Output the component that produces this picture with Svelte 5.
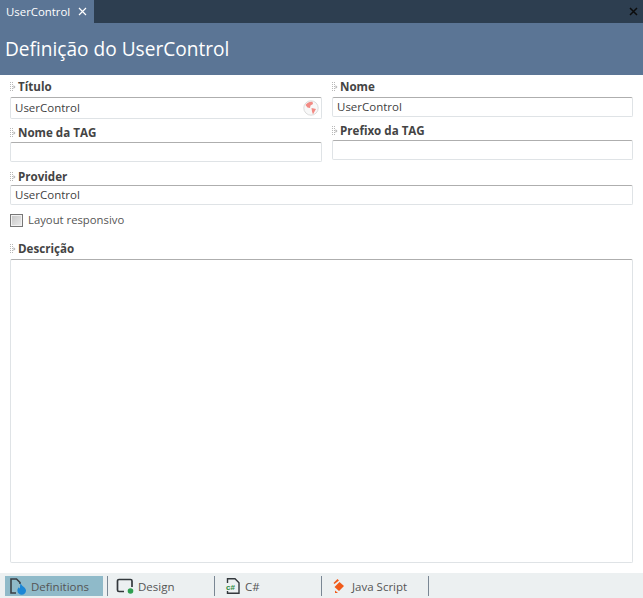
<script lang="ts">
  const tabs = [
    { id: 'definitions', label: 'Definitions', width: 98 },
    { id: 'design', label: 'Design', width: 106 },
    { id: 'csharp', label: 'C#', width: 106 },
    { id: 'js', label: 'Java Script', width: 106 }
  ];
</script>

{#snippet grip()}
  <svg class="grip" width="6" height="10" viewBox="0 0 6 10">
    <path d="M0.5 0v10M2.5 0v10" stroke="#b8b8b8" stroke-width="1" stroke-dasharray="1 1" />
    <path d="M3.500 3l2 2-2 2z" fill="#b4b4b4" />
  </svg>
{/snippet}

<div class="window">
  <div class="tabbar">
    <div class="doc-tab">
      <span>UserControl</span>
      <svg width="9" height="9" viewBox="0 0 9 9"><path d="M1 1l7 7M8 1l-7 7" stroke="#fff" stroke-width="1.2" /></svg>
    </div>
    <svg class="close" width="9" height="9" viewBox="0 0 9 9"><path d="M1 1l7 7M8 1l-7 7" stroke="#0c0c0c" stroke-width="1.5" /></svg>
  </div>

  <header class="title">Definição do UserControl</header>

  <main class="form">
    <div class="columns">
      <div class="col left">
        <div class="field">
          <div class="label">{@render grip()}Título</div>
          <div class="input tall">
            UserControl
            <svg class="globe" width="16" height="16" viewBox="0 0 16 16">
              <circle cx="8" cy="8" r="7.2" fill="#f8f8f8" stroke="#dcdcdc" />
              <path d="M2.500 5C4 2.500 7 1.200 9.500 1.800L10 4 7.500 5.500 7 8 4.500 7.500zM8.500 8l4.500 1-2 3.500-1 2-1-3z" fill="#f28b85" />
            </svg>
          </div>
        </div>
        <div class="field tag-left">
          <div class="label">{@render grip()}Nome da TAG</div>
          <div class="input"></div>
        </div>
      </div>
      <div class="col right">
        <div class="field">
          <div class="label">{@render grip()}Nome</div>
          <div class="input">UserControl</div>
        </div>
        <div class="field tag-right">
          <div class="label">{@render grip()}Prefixo da TAG</div>
          <div class="input"></div>
        </div>
      </div>
    </div>

    <div class="field provider">
      <div class="label">{@render grip()}Provider</div>
      <div class="input">UserControl</div>
    </div>

    <label class="check">
      <span class="box"></span>
      Layout responsivo
    </label>

    <div class="field description">
      <div class="label">{@render grip()}Descrição</div>
      <div class="textarea"></div>
    </div>
  </main>

  <footer class="bottom">
    {#each tabs as tab}
      <div class="item" class:active={tab.id === 'definitions'} style="width: {tab.width}px">
        {#if tab.id === 'definitions'}
          <svg width="20" height="18" viewBox="0 0 20 18">
            <path d="M8 16H3V2h5.500L12 5.500V7" fill="none" stroke="#3a3f44" stroke-width="1.600" />
            <path d="M12.500 6c.8 3 5.500 4.500 5.500 7.500a4.300 4.300 0 0 1-8.600 0c0-1.500.6-2.500 1.300-3.300.2.700.5 1 1 1.200.5-1.400.4-3.600.8-5.400z" fill="#1b87d6" />
          </svg>
        {:else if tab.id === 'design'}
          <svg width="20" height="18" viewBox="0 0 20 18">
            <path d="M8 14.500H3A1.500 1.500 0 0 1 1.500 13V4A1.500 1.500 0 0 1 3 2.500h11.500A1.500 1.500 0 0 1 16 4v6" fill="none" stroke="#33383c" stroke-width="1.700" />
            <circle cx="14.500" cy="14" r="2.800" fill="#2f9e4f" />
          </svg>
        {:else if tab.id === 'csharp'}
          <svg width="20" height="18" viewBox="0 0 20 18">
            <path d="M4.500 6V1.700h7.500l4 4V16.300H4.500V14" fill="none" stroke="#33383c" stroke-width="1.400" />
            <text x="3" y="12.500" class="cs">c#</text>
          </svg>
        {:else}
          <svg width="20" height="18" viewBox="0 0 20 18">
            <path d="M7.500 2l1.500 1.500-4.500 3.500L3.500 6zM9.500 5l4.500 4-5 5-4.500-4z" fill="#f05a1a" />
            <path d="M5 13.500l3 2.500H5z" fill="#f05a1a" />
          </svg>
        {/if}
        <span>{tab.label}</span>
      </div>
      <span class="sep"></span>
    {/each}
  </footer>
</div>

<style>
  :global(body) {
    margin: 0;
    background: #fff;
  }

  .window {
    width: 643px;
    height: 598px;
    display: flex;
    flex-direction: column;
    font-family: "Open Sans", "Noto Sans", sans-serif;
    font-size: 11.5px;
    color: #3f3f3f;
    overflow: hidden;
  }

  .tabbar {
    height: 23px;
    flex: none;
    background: #2d3e50;
    display: flex;
    align-items: center;
    justify-content: space-between;
    padding-right: 5px;
  }

  .doc-tab {
    width: 94px;
    height: 23px;
    box-sizing: border-box;
    background: #5b7595;
    color: #fff;
    display: flex;
    align-items: center;
    gap: 8px;
    padding-left: 6px;
    font-size: 11.4px;
  }

  .title {
    height: 52px;
    flex: none;
    box-sizing: border-box;
    padding: 14px 0 0 5px;
    background: #5b7595;
    color: #fff;
    font-size: 19.1px;
    line-height: 24px;
  }

  .form {
    flex: 1;
    min-height: 0;
    display: flex;
    flex-direction: column;
    padding: 4px 10px 10px;
  }

  .columns {
    display: grid;
    grid-template-columns: 312px 301px;
    gap: 10px;
  }

  .label {
    height: 18px;
    box-sizing: border-box;
    padding-bottom: 3px;
    line-height: 15px;
    font-weight: 700;
    font-size: 11.6px;
    color: #444;
    display: flex;
    align-items: center;
    gap: 2px;
  }

  .grip {
    flex: none;
  }

  .input {
    height: 20px;
    box-sizing: border-box;
    border: 1px solid #dfe3e6;
    border-top-color: #aeaeae;
    border-radius: 2px;
    padding: 0 4px;
    line-height: 18px;
    display: flex;
    align-items: center;
    justify-content: space-between;
    background: #fff;
  }

  .tall {
    height: 22px;
    padding-right: 2px;
  }

  .tag-left,
  .tag-right {
    margin-top: 6px;
  }

  .tag-left .label,
  .tag-right .label {
    height: 17px;
    padding-bottom: 2px;
  }

  .provider {
    margin-top: 7px;
  }

  .provider .label {
    height: 16px;
    padding-bottom: 1px;
  }

  .check {
    display: flex;
    align-items: center;
    gap: 5px;
    height: 14px;
    margin-top: 8px;
    color: #555;
    font-size: 11.3px;
    line-height: 12px;
  }

  .box {
    width: 13px;
    height: 13px;
    box-sizing: border-box;
    border: 1px solid #777;
    background: linear-gradient(135deg, #c4c4c4, #ececec);
    box-shadow: inset 0 0 0 1px #f2f2f2;
  }

  .description {
    flex: 1;
    min-height: 0;
    display: flex;
    flex-direction: column;
    margin-top: 14px;
  }

  .textarea {
    flex: 1;
    box-sizing: border-box;
    border: 1px solid #dfe3e6;
    border-top-color: #aeaeae;
    border-radius: 2px;
  }

  .bottom {
    height: 25px;
    flex: none;
    box-sizing: border-box;
    background: #ecf0f1;
    display: flex;
    align-items: center;
    padding: 1px 0 0 5px;
  }

  .item {
    height: 20px;
    box-sizing: border-box;
    display: flex;
    align-items: center;
    gap: 2px;
    padding-left: 8px;
    color: #555;
  }

  .item svg {
    flex: none;
  }

  .item.active {
    background: #8fbac9;
    padding-left: 3px;
    margin-right: 4px;
    gap: 3px;
  }

  .sep {
    width: 1px;
    height: 20px;
    flex: none;
    background: #7a8794;
  }

  .cs {
    font-family: "Liberation Sans", sans-serif;
    font-size: 8px;
    font-weight: 700;
    fill: #2c8a3c;
  }
</style>
